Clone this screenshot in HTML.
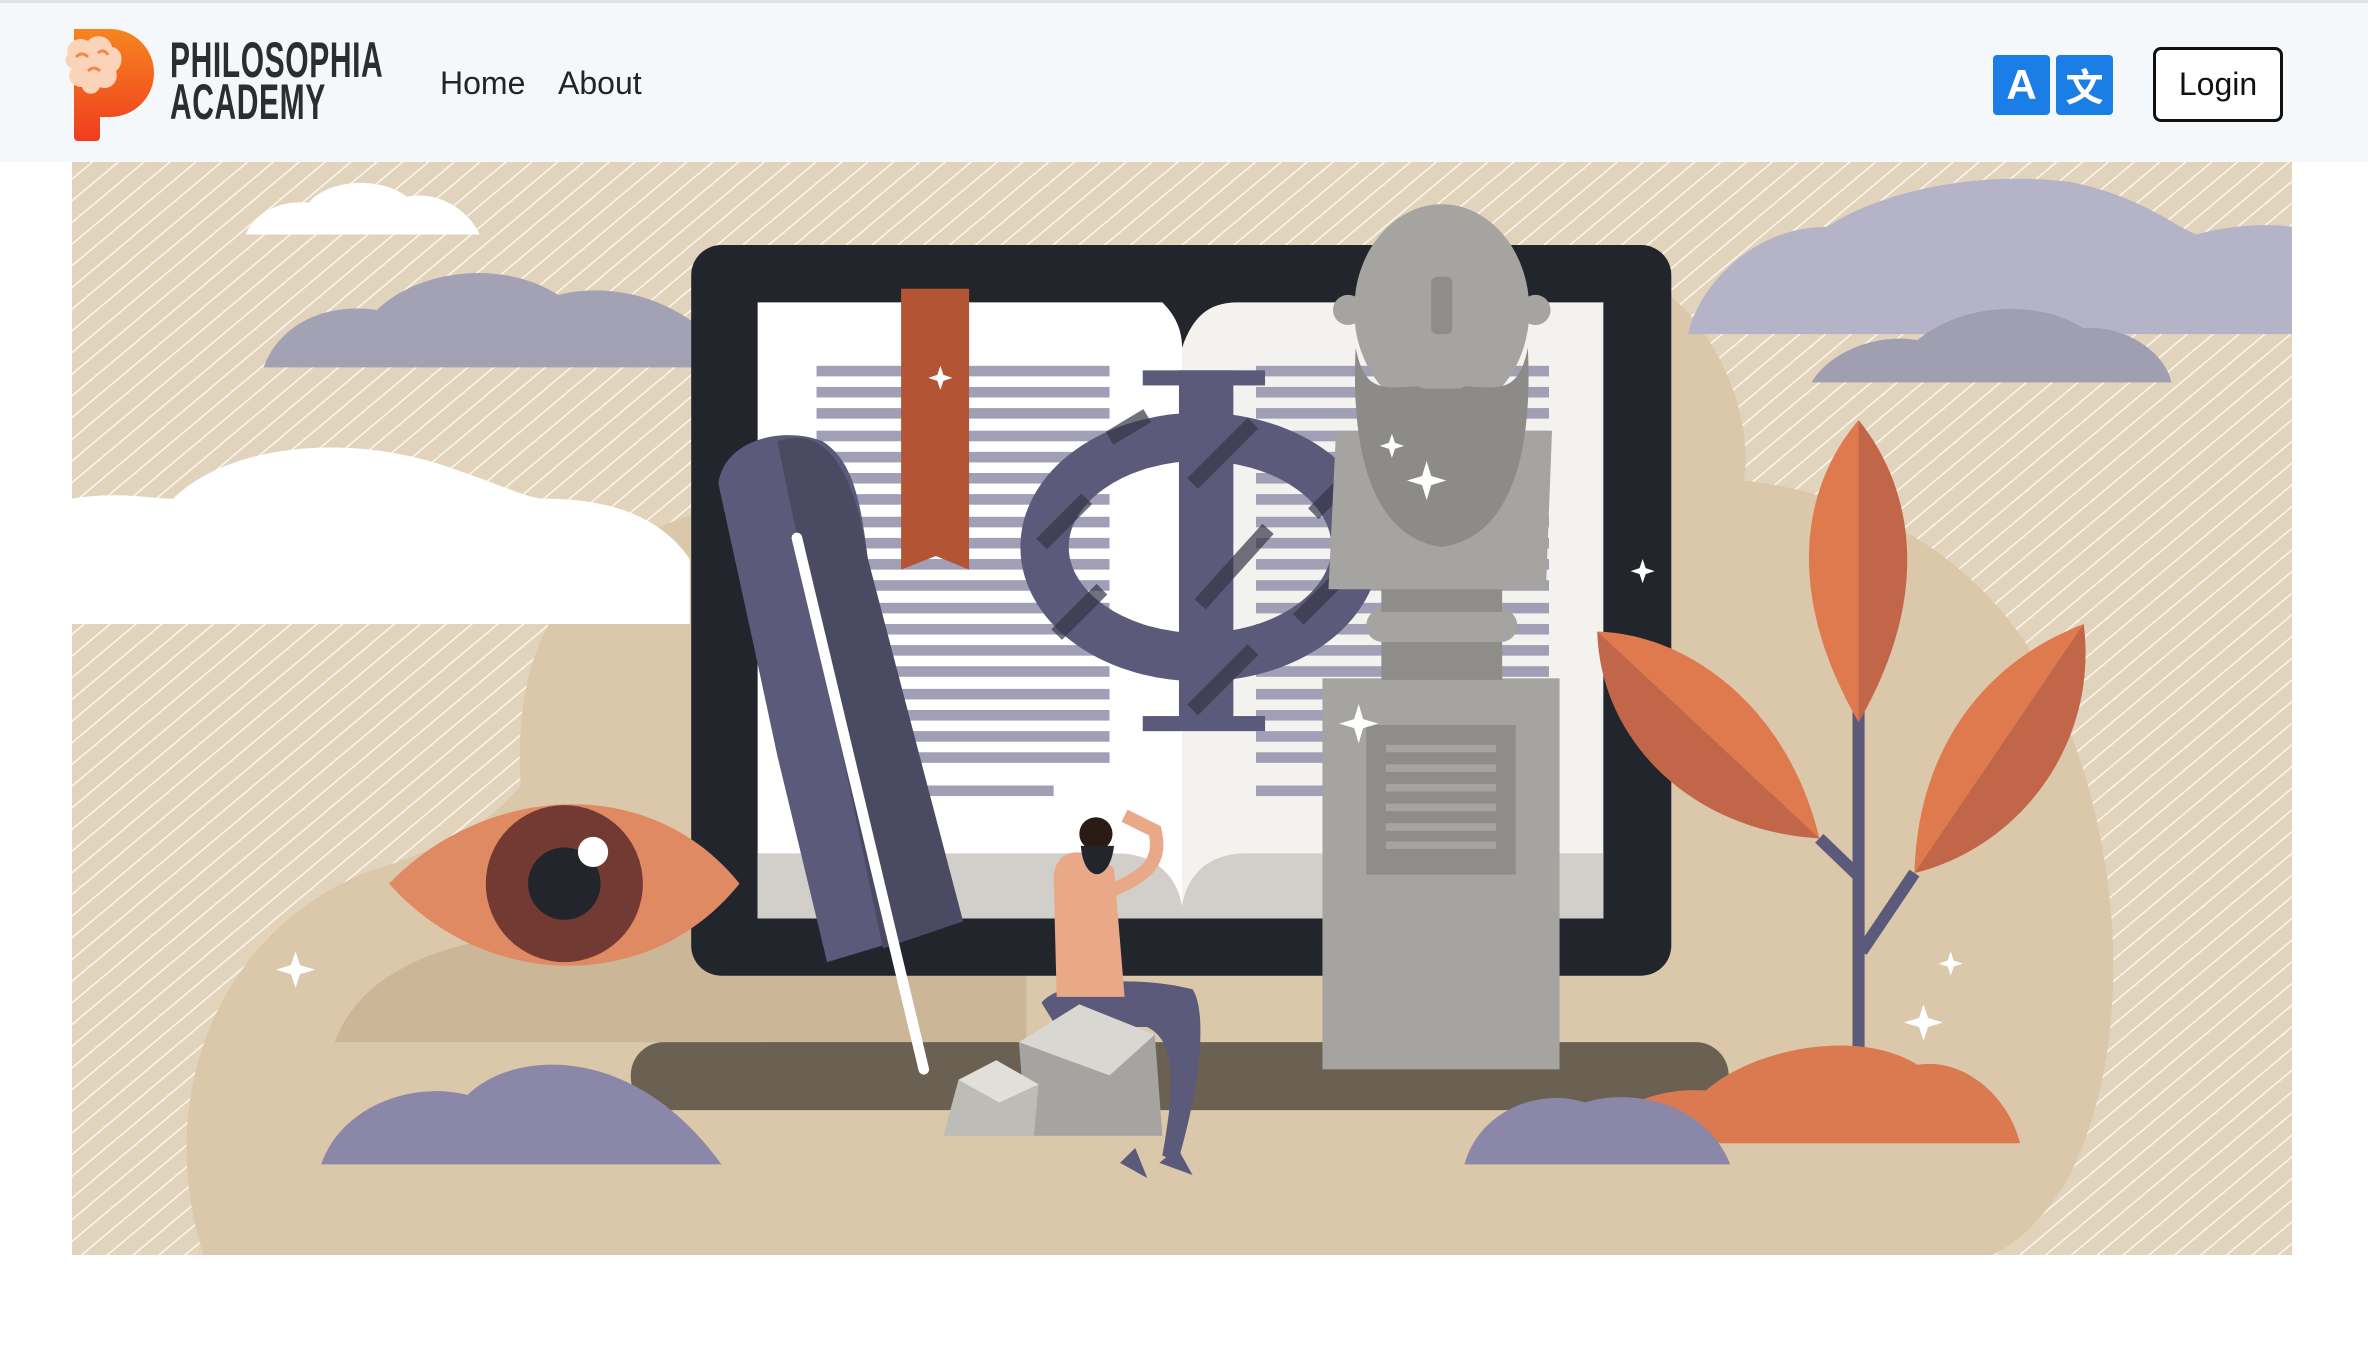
<!DOCTYPE html>
<html><head><meta charset="utf-8"><style>
html,body{margin:0;padding:0;background:#fff;width:2368px;height:1362px;overflow:hidden;font-family:"Liberation Sans",sans-serif;}
.hdr{position:absolute;left:0;top:0;width:2368px;height:162px;background:#f5f8fb;border-top:3px solid #dfe3e8;box-sizing:border-box;}
.brand{position:absolute;left:170px;top:36px;font-weight:bold;color:#2b2d31;font-size:50px;line-height:42px;transform:scaleX(0.6);transform-origin:0 0;letter-spacing:1px;}
.nav{position:absolute;top:62px;font-size:32px;color:#212529;}
.tr{position:absolute;top:52px;width:57px;height:60px;background:#1a7ee6;border-radius:4px;color:#fff;font-weight:bold;font-size:42px;text-align:center;line-height:60px;}
.login{position:absolute;left:2153px;top:44px;width:130px;height:75px;box-sizing:border-box;border:3px solid #111;border-radius:8px;background:#fff;font-size:32px;text-align:center;line-height:69px;color:#111;}
svg.hero{position:absolute;left:72px;top:162px;}
</style></head><body>
<div class="hdr">
<svg style="position:absolute;left:62px;top:22px" width="96" height="118" viewBox="0 0 96 118">
<defs><linearGradient id="lg" x1="0" y1="0" x2="0" y2="1"><stop offset="0" stop-color="#f7851f"/><stop offset="1" stop-color="#ee3d1f"/></linearGradient></defs>
<path d="M12 4 H48 A44 44 0 0 1 48 92 H38 V112 A4 4 0 0 1 34 116 H16 A4 4 0 0 1 12 112 Z" fill="url(#lg)"/>
<path d="M6 30 C2 18 16 10 26 16 C32 8 48 10 50 22 C62 24 62 40 54 46 C58 58 46 66 38 62 C34 72 22 70 20 62 C8 62 4 50 10 44 C2 40 2 32 6 30 Z" fill="#fbd3b8"/>
<path d="M14 32 q6-6 12 0 M26 46 q6-6 12 0 M36 28 q6-5 10 2" stroke="#f08a4a" stroke-width="3" fill="none"/>
</svg>
<div class="brand">PHILOSOPHIA<br>ACADEMY</div>
<div class="nav" style="left:440px">Home</div>
<div class="nav" style="left:558px">About</div>
<div class="tr" style="left:1993px">A</div>
<div class="tr" style="left:2056px;font-family:'Noto Sans CJK SC',sans-serif;font-size:38px">文</div>
<div class="login">Login</div>
</div>

<svg class="hero" width="2220" height="1093" viewBox="48 107 1470 724" preserveAspectRatio="none">
<defs>
<pattern id="st" width="11" height="11" patternUnits="userSpaceOnUse" patternTransform="rotate(-40)">
<rect width="11" height="11" fill="#e2d3bc"/><rect width="11" height="1" fill="#fbf6ee"/>
</pattern>
</defs>
<rect x="48" y="107" width="1470" height="724" fill="url(#st)"/>
<path d="M135 831 C100 720 150 610 250 575 C300 560 330 540 345 520 C340 430 370 370 460 340 L460 190 L1100 190 C1150 230 1160 290 1155 318 C1260 330 1330 390 1360 460 C1400 540 1420 680 1370 780 C1355 805 1340 820 1320 831 Z" fill="#dbc8ab"/>
<path d="M222 690 C240 640 300 620 380 615 L680 615 L680 690 Z" fill="#cbb797"/>
<path d="M163 155 C170 138 190 132 205 134 C215 120 250 115 270 130 C290 126 310 138 318 155 Z" fill="#fff"/>
<path d="M175 243 C185 215 215 200 250 205 C275 180 330 170 370 195 C410 185 460 200 487 243 Z" fill="#a3a2b5"/>
<path d="M48 413 L48 330 C80 325 100 330 115 330 C150 295 230 285 300 310 C330 320 350 330 360 330 C410 330 440 345 457 370 L457 413 Z" fill="#fff"/>
<path d="M1118 221 C1125 190 1160 150 1210 150 C1240 130 1300 112 1370 120 C1420 130 1440 150 1455 155 C1480 148 1505 148 1518 150 L1518 221 Z" fill="#b4b3c8"/>
<path d="M1200 253 C1210 235 1240 220 1270 225 C1300 200 1350 198 1380 217 C1410 215 1435 235 1438 253 Z" fill="#a09fb2"/>
<rect x="418" y="690" width="727" height="45" rx="22" fill="#6b6152"/>
<rect x="458" y="162" width="649" height="484" rx="20" fill="#23252d"/>
<path d="M502 200 L770 200 C780 210 783 220 783 230 L783 608 L502 608 Z" fill="#fff"/>
<path d="M783 230 C790 210 800 200 820 200 L1062 200 L1062 608 L783 608 Z" fill="#f4f2ef"/>
<path d="M502 565 L740 565 C765 565 780 580 783 600 C786 580 800 565 825 565 L1062 565 L1062 608 L502 608 Z" fill="#d2cfca"/>
<g fill="#a09fb5">
<rect x="541" y="242" width="194" height="7"/><rect x="541" y="256" width="194" height="7"/><rect x="541" y="270" width="194" height="7"/><rect x="541" y="285" width="194" height="7"/><rect x="541" y="299" width="194" height="7"/><rect x="541" y="313" width="194" height="7"/><rect x="541" y="327" width="194" height="7"/><rect x="541" y="342" width="194" height="7"/><rect x="541" y="356" width="194" height="7"/><rect x="541" y="370" width="194" height="7"/><rect x="541" y="384" width="194" height="7"/><rect x="541" y="399" width="194" height="7"/><rect x="541" y="413" width="194" height="7"/><rect x="541" y="427" width="194" height="7"/><rect x="541" y="441" width="194" height="7"/><rect x="541" y="456" width="194" height="7"/><rect x="541" y="470" width="194" height="7"/><rect x="541" y="484" width="194" height="7"/><rect x="541" y="498" width="194" height="7"/><rect x="541" y="520" width="157" height="7"/>
<rect x="832" y="242" width="194" height="7"/><rect x="832" y="256" width="194" height="7"/><rect x="832" y="270" width="194" height="7"/><rect x="832" y="285" width="194" height="7"/><rect x="832" y="299" width="194" height="7"/><rect x="832" y="313" width="194" height="7"/><rect x="832" y="327" width="194" height="7"/><rect x="832" y="342" width="194" height="7"/><rect x="832" y="356" width="194" height="7"/><rect x="832" y="370" width="194" height="7"/><rect x="832" y="384" width="194" height="7"/><rect x="832" y="399" width="194" height="7"/><rect x="832" y="413" width="194" height="7"/><rect x="832" y="427" width="194" height="7"/><rect x="832" y="441" width="194" height="7"/><rect x="832" y="456" width="194" height="7"/><rect x="832" y="470" width="194" height="7"/><rect x="832" y="484" width="194" height="7"/><rect x="832" y="498" width="194" height="7"/><rect x="832" y="520" width="194" height="7"/>
</g>
<path d="M597 191 H642 V377 L620 368 L597 377 Z" fill="#b35535"/>
<g fill="#5c5a7a">
<ellipse cx="795" cy="362" rx="103" ry="73" fill="none" stroke="#5c5a7a" stroke-width="32"/>
<rect x="757" y="245" width="81" height="10"/><rect x="757" y="474" width="81" height="10"/>
<rect x="781" y="245" width="36" height="238"/>
</g>
<g stroke="#363648" stroke-width="10" opacity="0.7">
<path d="M700 420 L730 390 M690 360 L720 330 M735 290 L760 275 M790 470 L830 430 M795 400 L840 350 M790 320 L830 280 M860 410 L885 385 M870 340 L895 315"/>
</g>
<g>
<rect x="876" y="449" width="157" height="259" fill="#a5a4a0"/>
<rect x="905" y="480" width="99" height="99" fill="#8e8d89"/>
<g fill="#a5a4a0"><rect x="918" y="493" width="73" height="5"/><rect x="918" y="506" width="73" height="5"/><rect x="918" y="519" width="73" height="5"/><rect x="918" y="532" width="73" height="5"/><rect x="918" y="545" width="73" height="5"/><rect x="918" y="557" width="73" height="5"/></g>
<rect x="915" y="420" width="80" height="30" fill="#8e8d89"/>
<rect x="905" y="403" width="100" height="22" rx="11" fill="#a5a4a0"/>
<rect x="915" y="385" width="80" height="20" fill="#8e8d89"/>
<path d="M885 285 L1028 285 L1024 390 L880 390 Z" fill="#a5a4a0"/>
<ellipse cx="955" cy="205" rx="58" ry="70" fill="#a5a4a0"/>
<circle cx="893" cy="205" r="10" fill="#a5a4a0"/><circle cx="1017" cy="205" r="10" fill="#a5a4a0"/>
<path d="M898 230 C905 265 920 255 955 255 C990 255 1005 265 1012 230 C1015 290 1005 355 955 362 C905 355 895 290 898 230 Z" fill="#8c8b87"/>
<rect x="937" y="243" width="36" height="14" rx="7" fill="#a5a4a0"/>
<rect x="948" y="183" width="14" height="38" rx="4" fill="#8e8d89"/>
</g>
<path d="M476 320 C480 290 520 282 545 292 C565 305 570 330 575 370 L638 610 L548 637 L515 500 L500 430 Z" fill="#5c5a7a"/>
<path d="M515 292 C545 282 565 305 575 370 L638 610 L585 628 Z" fill="#4b4a63"/>
<path d="M528 356 L612 708" stroke="#fff" stroke-width="7" stroke-linecap="round"/>
<path d="M690 664 C700 650 750 645 790 655 C800 670 795 720 780 770 L770 765 C778 720 780 690 760 680 L700 680 Z" fill="#5c5a7a"/>
<path d="M698 580 C700 560 720 560 738 575 L745 660 L700 660 Z" fill="#e9a989"/>
<path d="M735 590 C760 580 770 570 765 550 L745 540" stroke="#e9a989" stroke-width="9" fill="none"/>
<circle cx="726" cy="552" r="11" fill="#2a1c14"/>
<path d="M716 560 C718 585 735 585 738 560 Z" fill="#23252d"/>
<path d="M742 770 L760 780 L752 760 Z M768 770 L790 778 L780 760 Z" fill="#5c5a7a"/>
<path d="M675 690 L715 665 L765 685 L770 752 L680 752 Z" fill="#a5a4a0"/>
<path d="M675 690 L715 665 L765 685 L735 712 Z" fill="#d8d7d2"/>
<path d="M625 752 L635 715 L660 702 L688 718 L685 752 Z" fill="#bdbcb7"/>
<path d="M635 715 L660 702 L688 718 L662 730 Z" fill="#e0dfda"/>
<path d="M258 585 C320 520 430 510 490 585 C430 660 320 655 258 585 Z" fill="#e08a64"/>
<circle cx="374" cy="585" r="52" fill="#733a33"/>
<circle cx="374" cy="585" r="24" fill="#23252d"/>
<circle cx="393" cy="564" r="10" fill="#fff"/>
<g stroke="#5c5a7a" stroke-width="8" fill="none"><path d="M1231 470 V700"/><path d="M1231 580 L1205 555"/><path d="M1233 630 L1268 578"/></g>
<path d="M1231 278 C1195 320 1180 390 1231 478 C1282 390 1265 320 1231 278 Z" fill="#df7a4f"/>
<path d="M1231 278 C1265 320 1282 390 1231 478 Z" fill="#c2664a"/>
<path d="M1058 418 C1120 420 1185 470 1205 555 C1120 550 1060 490 1058 418 Z" fill="#df7a4f"/>
<path d="M1058 418 L1205 555 C1120 550 1060 490 1058 418 Z" fill="#c2664a"/>
<path d="M1380 413 C1390 490 1340 560 1268 578 C1270 500 1310 440 1380 413 Z" fill="#df7a4f"/>
<path d="M1380 413 C1390 490 1340 560 1268 578 Z" fill="#c2664a"/>
<path d="M1052 757 C1070 730 1100 720 1130 722 C1160 695 1230 680 1270 705 C1300 700 1330 725 1338 757 Z" fill="#db7a50"/>
<path d="M970 771 C980 735 1020 720 1050 730 C1080 720 1130 730 1146 771 Z" fill="#8a87a8"/>
<path d="M213 771 C225 735 270 715 310 725 C340 695 420 690 478 771 Z" fill="#8a87a8"/>
<g fill="#fff">
<path d="M623 242 l2 6 6 2 -6 2 -2 6 -2-6 -6-2 6-2z"/>
<path d="M922 287 l2 6 6 2 -6 2 -2 6 -2-6 -6-2 6-2z"/>
<path d="M945 305 l3 10 10 3 -10 3 -3 10 -3-10 -10-3 10-3z"/>
<path d="M900 466 l3 10 10 3 -10 3 -3 10 -3-10 -10-3 10-3z"/>
<path d="M1088 370 l2 6 6 2 -6 2 -2 6 -2-6 -6-2 6-2z"/>
<path d="M196 630 l3 9 10 3 -10 3 -3 9 -3-9 -10-3 10-3z"/>
<path d="M1292 630 l2 6 6 2 -6 2 -2 6 -2-6 -6-2 6-2z"/>
<path d="M1274 665 l3 9 10 3 -10 3 -3 9 -3-9 -10-3 10-3z"/>
</g>
</svg>
</body></html>
